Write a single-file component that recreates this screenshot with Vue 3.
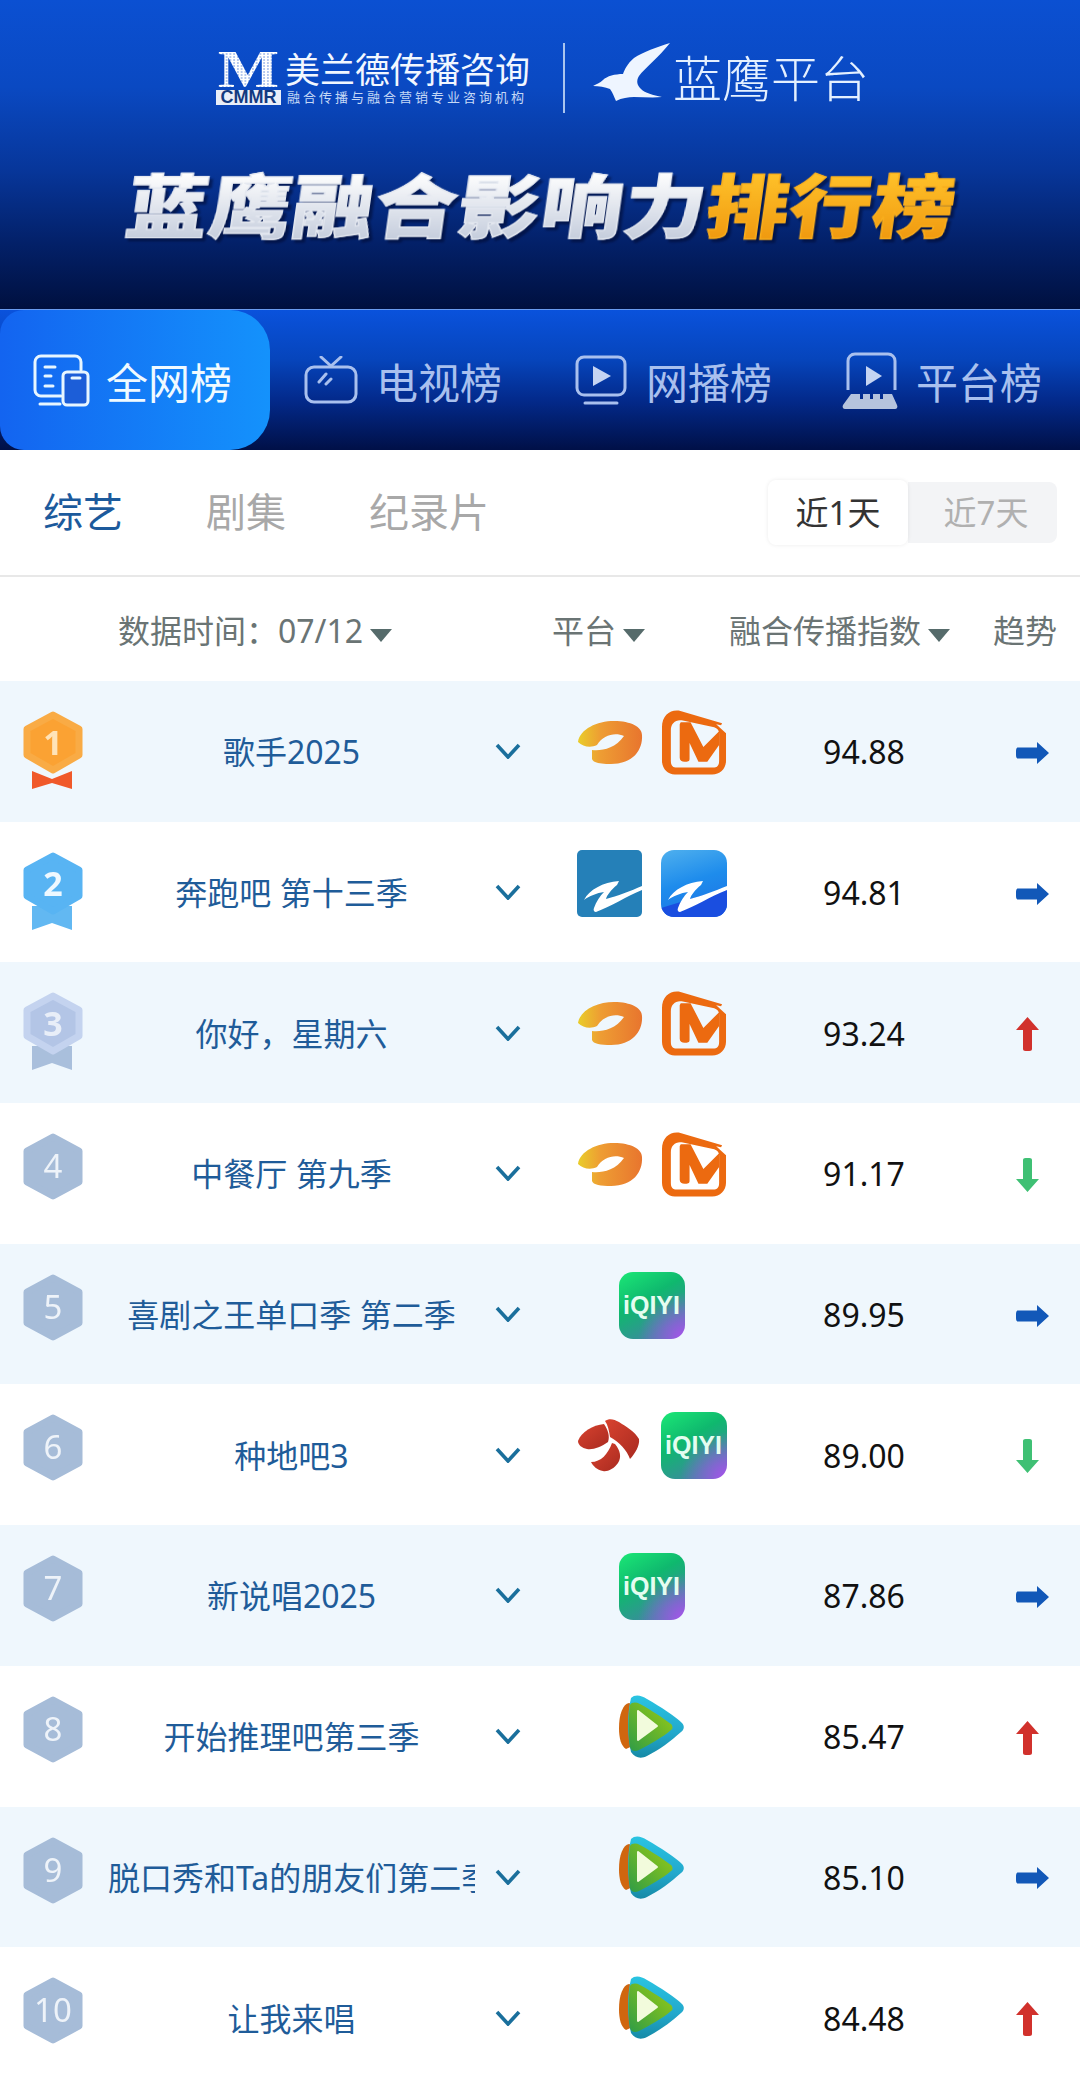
<script setup>
const tabs = [
  { name: '全网榜', icon: 'all', active: true },
  { name: '电视榜', icon: 'tv' },
  { name: '网播榜', icon: 'web' },
  { name: '平台榜', icon: 'platform' },
]

const rows = [
  { rank: 1, name: '歌手2025', logos: ['hunan', 'mango'], score: '94.88', trend: 'flat' },
  { rank: 2, name: '奔跑吧 第十三季', logos: ['zhejiang', 'zapp'], score: '94.81', trend: 'flat' },
  { rank: 3, name: '你好，星期六', logos: ['hunan', 'mango'], score: '93.24', trend: 'up' },
  { rank: 4, name: '中餐厅 第九季', logos: ['hunan', 'mango'], score: '91.17', trend: 'down' },
  { rank: 5, name: '喜剧之王单口季 第二季', logos: ['iqiyi'], score: '89.95', trend: 'flat' },
  { rank: 6, name: '种地吧3', logos: ['dragon', 'iqiyi'], score: '89.00', trend: 'down' },
  { rank: 7, name: '新说唱2025', logos: ['iqiyi'], score: '87.86', trend: 'flat' },
  { rank: 8, name: '开始推理吧第三季', logos: ['tencent'], score: '85.47', trend: 'up' },
  { rank: 9, name: '脱口秀和Ta的朋友们第二季', logos: ['tencent'], score: '85.10', trend: 'flat' },
  { rank: 10, name: '让我来唱', logos: ['tencent'], score: '84.48', trend: 'up' },
]

const medals = {
  1: { fill: '#fba233', edge: '#f9ab45', ribbon: '#f0592a', num: '#ffe3b8' },
  2: { fill: '#58b4f3', edge: '#58b4f3', ribbon: '#62b8f2', num: '#eef8ff' },
  3: { fill: '#b3c5e6', edge: '#c4d3ef', ribbon: '#a9bfdc', num: '#e8eef8' },
}
</script>

<template>
  <main class="page">
    <header class="hero">
      <div class="brand">
        <div class="cmmr">
          <div class="cmmr-top">
            <span class="cmmr-m">M</span>
            <span class="cmmr-name">美兰德传播咨询</span>
          </div>
          <div class="cmmr-bottom">
            <span class="cmmr-tag">CMMR</span>
            <span class="cmmr-slogan">融合传播与融合营销专业咨询机构</span>
          </div>
        </div>
        <div class="brand-line"></div>
        <svg class="bird" width="77" height="59" viewBox="0 0 77 59">
          <path d="M77 0C64 4 50 9 41 15C34 21 32 26 30 31C22 31 14 33 10 37C7 40 3 41 0 43C6 43 12 44 17 46C20 50 21 54 23 58C29 55 35 54 41 54C50 54 60 55 69 54C60 52 52 50 48 46C44 42 43 38 46 33C52 25 66 14 77 0Z" fill="#eef5ff" />
        </svg>
        <span class="platform-name">蓝鹰平台</span>
      </div>
      <h1 class="title"><span class="title-white">蓝鹰融合影响力</span><span class="title-gold">排行榜</span></h1>
    </header>

    <nav class="tabs">
      <div v-for="tab in tabs" :key="tab.name" class="tab" :class="{ active: tab.active }">
        <div class="tab-icon">
          <svg v-if="tab.icon === 'all'" width="57" height="53" viewBox="0 0 57 53" fill="none" stroke="#e8f6ff" stroke-width="3" stroke-linecap="round">
            <path d="M28 42H8a6 6 0 0 1-6-6V8a6 6 0 0 1 6-6h34a6 6 0 0 1 6 6v8" />
            <rect x="30" y="18" width="25" height="33" rx="4" fill="#1c5ed8" />
            <path d="M12 13h10M12 22h6M12 32h8M7 50h20M39 24h8" />
          </svg>
          <svg v-else-if="tab.icon === 'tv'" width="54" height="48" viewBox="0 0 54 48" fill="none" stroke="#a9c0ee" stroke-width="3" stroke-linecap="round">
            <rect x="2" y="11" width="50" height="35" rx="8" />
            <path d="M17 1l10 9 10-9M15 26l7-8M22 28l5-5" />
          </svg>
          <svg v-else-if="tab.icon === 'web'" width="52" height="50" viewBox="0 0 52 50" fill="none" stroke="#a9c0ee" stroke-width="3" stroke-linecap="round">
            <rect x="2" y="2" width="48" height="38" rx="7" />
            <path d="M18 11l18 10-18 10z" fill="#c5d4f2" stroke="none" />
            <path d="M10 48h32" />
          </svg>
          <svg v-else width="59" height="57" viewBox="0 0 59 57" fill="none" stroke="#a9c0ee" stroke-width="3">
            <path d="M6 38V9a7 7 0 0 1 7-7h33a7 7 0 0 1 7 7v29" />
            <path d="M24 14l16 10-16 10z" fill="#c5d4f2" stroke="none" />
            <path d="M9 42h9v5h3v-5h7v5h3v-5h7v5h3v-5h9l5 11c1 2 0 4-2 4H3c-2 0-3-2-2-4z" fill="#b5c3dd" stroke="none" />
          </svg>
        </div>
        <span>{{ tab.name }}</span>
      </div>
    </nav>

    <section class="filters">
      <div class="types">
        <span class="type current">综艺</span>
        <span class="type">剧集</span>
        <span class="type">纪录片</span>
      </div>
      <div class="range">
        <span class="range-on">近1天</span>
        <span class="range-off">近7天</span>
      </div>
    </section>

    <section class="list-head">
      <div class="head-time">数据时间：07/12<i class="caret"></i></div>
      <div class="head-platform">平台<i class="caret"></i></div>
      <div class="head-score">融合传播指数<i class="caret"></i></div>
      <div class="head-trend">趋势</div>
    </section>

    <section class="list">
      <div v-for="row in rows" :key="row.rank" class="row">
        <div class="rank">
          <svg v-if="medals[row.rank]" width="62" height="78" viewBox="0 0 62 78">
            <path v-if="row.rank === 1" d="M10 60L30 68L50 60V78L30 72L10 78Z" :fill="medals[row.rank].ribbon" />
            <path v-else d="M10 54H50V78L30 71L10 78Z" :fill="medals[row.rank].ribbon" />
            <path d="M31 4L57 18V44L31 59L5 44V18Z" :fill="medals[row.rank].fill" :stroke="medals[row.rank].edge" stroke-width="7" stroke-linejoin="round" />
            <text x="31" y="44" text-anchor="middle" class="medal-num" :fill="medals[row.rank].num">{{ row.rank }}</text>
          </svg>
          <svg v-else width="62" height="67" viewBox="0 0 62 67">
            <path d="M31 4L57 18V49L31 63L5 49V18Z" fill="#a6bcd8" stroke="#a6bcd8" stroke-width="7" stroke-linejoin="round" />
            <text x="31" y="45" text-anchor="middle" class="rank-num">{{ row.rank }}</text>
          </svg>
        </div>

        <div class="name">{{ row.name }}</div>

        <div class="more">
          <svg width="26" height="16" viewBox="0 0 26 16" fill="none">
            <path d="M2 2L13 14L24 2" stroke="#1a6f9c" stroke-width="3.6" />
          </svg>
        </div>

        <div class="logos">
          <template v-for="logo in row.logos" :key="logo">
            <svg v-if="logo === 'hunan'" class="logo" viewBox="0 0 66 67">
              <defs>
                <linearGradient id="hunan-grad" x1="0" y1="0" x2="1" y2="0">
                  <stop offset="0" stop-color="#e9cd2a" />
                  <stop offset="0.35" stop-color="#ee9d33" />
                  <stop offset="1" stop-color="#e8752e" />
                </linearGradient>
              </defs>
              <path transform="translate(0 11)" d="M1 22C3 9 20 1 37 1C54 1 65 7 65 15C66 30 56 44 34 44C24 44 16 43 15 39L15 30C24 31 38 29 47 16C38 12 26 15 20 25C14 28 6 27 1 22Z" fill="url(#hunan-grad)" />
            </svg>

            <svg v-else-if="logo === 'mango'" class="logo" viewBox="0 0 67 67">
              <path fill-rule="evenodd" d="M1 18C1 6 9 0 18 1L62 14L61 16L56 15L66 24V52C66 60 60 66 52 66H14C7 66 1 60 1 52ZM10 21V52C10 57 12 59 16 59H53C57 59 59 57 59 52V24C59 21 57 19 54 18L21 11C15 10 10 14 10 21Z" fill="#ec6a10" />
              <path d="M20 13H30L43 38L59 22V36L47 53H38L29 34V50C29 53 27 53 24 53C21 53 19 52 19 49V15Z" fill="#ec6a10" />
            </svg>

            <svg v-else-if="logo === 'zhejiang'" class="logo" viewBox="0 0 66 67">
              <rect x="0" y="0" width="65" height="67" rx="5" fill="#2580b8" />
              <path d="M7 50C12 40 26 32 42 31L40 35C34 40 30 45 29 49C40 46 54 41 65 36V40C50 46 33 57 19 62C17 62 16 60 17 58C19 52 23 46 27 42C20 43 12 46 7 50Z" fill="#fff" />
            </svg>

            <svg v-else-if="logo === 'zapp'" class="logo" viewBox="0 0 66 67">
              <defs>
                <linearGradient id="zapp-grad" x1="0" y1="0" x2="0.3" y2="1">
                  <stop offset="0" stop-color="#4fb0ee" />
                  <stop offset="0.55" stop-color="#1e8cec" />
                  <stop offset="1" stop-color="#1c78e6" />
                </linearGradient>
                <clipPath id="zapp-clip"><rect width="66" height="67" rx="13" /></clipPath>
              </defs>
              <g clip-path="url(#zapp-clip)">
                <rect width="66" height="67" fill="url(#zapp-grad)" />
                <path d="M0 67V58L66 38V67Z" fill="#1a4ee0" />
                <path d="M7 50C12 40 26 32 42 31L40 35C34 40 30 45 29 49C40 46 54 41 66 36V40C50 46 33 57 19 62C17 62 16 60 17 58C19 52 23 46 27 42C20 43 12 46 7 50Z" fill="#fff" />
              </g>
            </svg>

            <div v-else-if="logo === 'iqiyi'" class="logo iqiyi">iQIYI</div>

            <svg v-else-if="logo === 'dragon'" class="logo" viewBox="0 0 66 67">
              <defs>
                <linearGradient id="dragon-grad" x1="0" y1="0" x2="1" y2="1">
                  <stop offset="0" stop-color="#d8432f" />
                  <stop offset="1" stop-color="#a92a20" />
                </linearGradient>
              </defs>
              <path d="M1 29C4 20 16 13 27 12C31 18 33 24 31 30C24 35 16 38 10 37C5 36 1 33 1 29Z" fill="url(#dragon-grad)" />
              <path d="M28 9C32 6 37 7 42 10C50 15 58 20 62 27C63 33 58 42 53 47C50 38 42 30 33 25C32 19 31 13 28 9Z" fill="url(#dragon-grad)" />
              <path d="M38 32C43 38 45 45 41 51C37 57 30 60 26 59C20 58 16 54 14 50C24 50 31 42 35 31Z" fill="url(#dragon-grad)" />
            </svg>

            <svg v-else class="logo" viewBox="0 0 66 67">
              <defs>
                <linearGradient id="tv-outer" x1="0" y1="0" x2="0" y2="1">
                  <stop offset="0" stop-color="#2ac4e2" />
                  <stop offset="0.6" stop-color="#22a8cc" />
                  <stop offset="1" stop-color="#168aa6" />
                </linearGradient>
                <linearGradient id="tv-green" x1="1" y1="0" x2="0" y2="1">
                  <stop offset="0" stop-color="#9ccc12" />
                  <stop offset="1" stop-color="#2f9c46" />
                </linearGradient>
              </defs>
              <path d="M10 9C4 10 0 20 0 34C0 44 2 52 7 55L18 50V12Z" fill="#d0660f" />
              <path d="M12 4C16 0 22 1 28 5C42 13 56 22 63 29C66 32 65 36 62 38C52 47 40 56 28 62C22 65 16 64 12 58C8 42 8 20 12 4Z" fill="url(#tv-outer)" />
              <path d="M11 11C13 8 17 8 21 10C32 16 44 24 52 30C54 32 54 35 52 36C44 43 30 51 20 56C16 58 12 57 11 53C9 38 9 24 11 11Z" fill="url(#tv-green)" />
              <path d="M19 17L38 32L19 46Z" fill="#f2fbdc" stroke="#f2fbdc" stroke-width="2" stroke-linejoin="round" />
            </svg>
          </template>
        </div>

        <div class="score">{{ row.score }}</div>

        <div class="trend">
          <svg v-if="row.trend === 'flat'" width="33" height="22" viewBox="0 0 33 22">
            <path d="M2 5.500H21V0L33 11L21 22V16.500H2C0 16.500 0 14 0 11S0 5.500 2 5.500Z" fill="#1258b8" />
          </svg>
          <svg v-else-if="row.trend === 'up'" width="23" height="34" viewBox="0 0 23 34">
            <path d="M11.5 0L23 13H16V32C16 34 14 34 11.5 34S7 34 7 32V13H0Z" fill="#d1312c" />
          </svg>
          <svg v-else width="23" height="34" viewBox="0 0 23 34">
            <path d="M11.5 34L23 21H16V2C16 0 14 0 11.5 0S7 0 7 2V21H0Z" fill="#3fc074" />
          </svg>
        </div>
      </div>
    </section>
  </main>
</template>

<style>
html,
body {
  margin: 0;
  background: #fff;
}
</style>

<style scoped>
.page {
  width: 1080px;
  height: 2089px;
  overflow: hidden;
  font-family: "Noto Sans", "Noto Sans CJK SC", sans-serif;
  background: #fff;
}

.hero {
  height: 310px;
  box-sizing: border-box;
  padding-top: 43px;
  background: linear-gradient(180deg, #0b50d2 0%, #0a49c2 28%, #07369a 55%, #03216a 78%, #00103f 100%);
  border-bottom: 1px solid #6a9cf0;
}

.brand {
  display: flex;
  align-items: center;
  height: 70px;
  padding-left: 216px;
  color: #eef5ff;
}

.cmmr {
  width: 314px;
  display: flex;
  flex-direction: column;
}

.cmmr-top {
  display: flex;
  align-items: center;
  height: 38px;
  padding-left: 3px;
}

.cmmr-m {
  width: 59px;
  font-family: "Liberation Serif", serif;
  font-weight: 700;
  font-size: 52px;
  line-height: 38px;
  text-align: center;
  color: transparent;
  background: radial-gradient(circle, #fff 1.2px, rgba(255, 255, 255, 0.7) 1.5px, rgba(255, 255, 255, 0.35) 2px) 0 0 / 3px 3px;
  -webkit-background-clip: text;
  background-clip: text;
  transform: scaleX(1.25);
}

.cmmr-name {
  margin-left: 7px;
  font-size: 35px;
  line-height: 38px;
  white-space: nowrap;
  color: #f2f7ff;
}

.cmmr-bottom {
  display: flex;
  align-items: center;
  margin-top: 1px;
}

.cmmr-tag {
  width: 65px;
  height: 15px;
  line-height: 15px;
  background: #e8eef8;
  color: #123a80;
  font-family: "Liberation Sans", sans-serif;
  font-weight: 700;
  font-size: 18px;
  text-align: center;
}

.cmmr-slogan {
  margin-left: 6px;
  font-size: 13px;
  letter-spacing: 3px;
  line-height: 15px;
  white-space: nowrap;
  color: #c4d8f6;
}

.brand-line {
  width: 2px;
  height: 70px;
  margin-left: 33px;
  background: #a9c4ee;
}

.bird {
  margin-left: 28px;
  flex: none;
  align-self: flex-start;
}

.platform-name {
  margin-left: 3px;
  font-size: 49px;
  font-weight: 300;
  line-height: 60px;
  white-space: nowrap;
  color: #e4f0ff;
}

.title {
  margin: 52px 0 0;
  height: 80px;
  line-height: 80px;
  padding-left: 3px;
  font-size: 69px;
  font-weight: 900;
  text-align: center;
  white-space: nowrap;
  letter-spacing: 1px;
  transform: skewX(-8deg) scaleX(1.185);
  filter: drop-shadow(3px 3px 1px rgba(0, 10, 50, 0.6));
}

.title-white {
  color: transparent;
  background: linear-gradient(180deg, #fff 15%, #c6cedd 85%);
  -webkit-background-clip: text;
  background-clip: text;
  -webkit-text-stroke: 1.2px #e4e8f0;
}

.title-gold {
  color: transparent;
  background: linear-gradient(180deg, #ffc22a 15%, #f09a10 85%);
  -webkit-background-clip: text;
  background-clip: text;
  -webkit-text-stroke: 1.2px #f9ae1c;
}

.tabs {
  display: flex;
  height: 140px;
  background: linear-gradient(180deg, #0a52dc 0%, #0645bc 35%, #03298a 65%, #001047 100%);
}

.tab {
  flex: 0 0 270px;
  display: flex;
  align-items: center;
  gap: 15px;
  box-sizing: border-box;
  padding-left: 31px;
  font-size: 42px;
  color: #a9c0ee;
  white-space: nowrap;
}

.tab.active {
  color: #f0faff;
  border-radius: 24px 40px 40px 24px;
  background: linear-gradient(90deg, #1364f0, #1492fc);
}

.tab-icon {
  width: 60px;
  display: flex;
  justify-content: center;
}

.filters {
  display: flex;
  align-items: center;
  justify-content: space-between;
  height: 127px;
  box-sizing: border-box;
  padding: 0 23px 0 43px;
  border-bottom: 2px solid #e8e8e8;
}

.types {
  display: flex;
  gap: 83px;
  margin-top: -1px;
}

.type {
  font-size: 40px;
  line-height: 46px;
  color: #a8a8a8;
}

.type.current {
  color: #1c5a9c;
}

.range {
  display: flex;
  align-items: center;
  font-size: 33px;
  text-align: center;
}

.range-on {
  width: 140px;
  height: 65px;
  line-height: 65px;
  color: #333;
  background: #fff;
  border-radius: 8px;
  box-shadow: 0 0 4px rgba(0, 0, 0, 0.08);
  position: relative;
}

.range-off {
  width: 149px;
  height: 61px;
  box-sizing: border-box;
  padding-left: 7px;
  line-height: 61px;
  color: #b0b0b0;
  background: #f3f4f6;
  border-radius: 0 8px 8px 0;
}

.list-head {
  display: flex;
  align-items: center;
  height: 104px;
  font-size: 32px;
  color: #6a7474;
  white-space: nowrap;
}

.head-time {
  margin-left: 118px;
  width: 434px;
}

.head-platform {
  width: 177px;
}

.head-score {
  width: 264px;
}

.caret {
  display: inline-block;
  margin-left: 7px;
  vertical-align: 1px;
  border-left: 11px solid transparent;
  border-right: 11px solid transparent;
  border-top: 13px solid #566b6b;
}

.row {
  display: grid;
  grid-template-columns: 108px 367px 65px 223px 202px 1fr;
  align-items: center;
  height: 140.7px;
}

.row:nth-child(odd) {
  background: #eff7fd;
}

.rank {
  align-self: start;
  margin-top: 30px;
  padding-left: 22px;
  line-height: 0;
}

.rank svg {
  filter: blur(0.5px);
}

.medal-num {
  font-size: 34px;
  font-weight: 700;
}

.rank-num {
  font-size: 33px;
  fill: #eef3f9;
}

.name {
  overflow: hidden;
  white-space: nowrap;
  text-align: center;
  font-size: 32px;
  line-height: 44px;
  padding-top: 2px;
  color: #1f5c99;
}

.more {
  display: flex;
  justify-content: center;
  line-height: 0;
}

.logos {
  align-self: start;
  margin-top: 28px;
  display: flex;
  justify-content: center;
  gap: 18px;
}

.logo {
  display: block;
  width: 66px;
  height: 67px;
  flex: none;
}

.iqiyi {
  box-sizing: border-box;
  border-radius: 14px;
  background:
    radial-gradient(circle at 100% 100%, #ad4ff0 0, rgba(173, 79, 240, 0) 50%),
    linear-gradient(150deg, #1be876 0%, #0fb86e 40%, #3a8c9c 80%);
  color: #e4fdf0;
  font-family: "Liberation Sans", sans-serif;
  font-weight: 700;
  font-size: 25px;
  line-height: 67px;
  text-align: center;
}

.score {
  text-align: center;
  font-size: 32px;
  line-height: 44px;
  padding-top: 2px;
  color: #111;
}

.trend {
  display: flex;
  align-items: center;
  padding-left: 51px;
  padding-top: 3px;
  line-height: 0;
}
</style>
